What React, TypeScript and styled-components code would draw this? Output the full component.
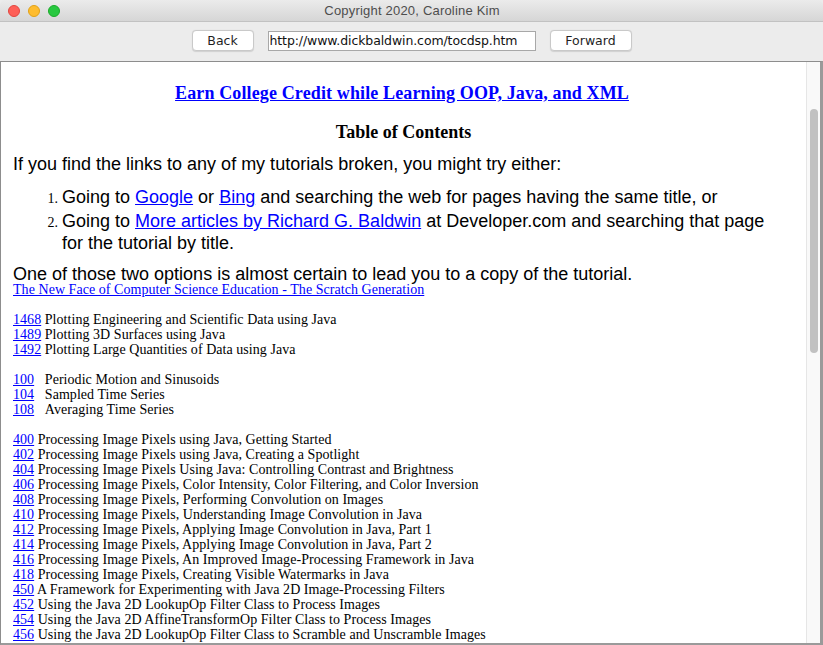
import React from "react";
import styled, { createGlobalStyle } from "styled-components";

const GlobalStyle = createGlobalStyle`
  html, body { margin: 0; padding: 0; background: #ffffff; }
  body { width: 823px; height: 645px; overflow: hidden; }
  * { box-sizing: border-box; }
`;

const Window = styled.div`
  width: 823px;
  height: 645px;
  display: flex;
  flex-direction: column;
  background: #ececec;
  overflow: hidden;
`;

const TitleBar = styled.div`
  height: 22px;
  flex: none;
  display: flex;
  align-items: center;
  position: relative;
  background: linear-gradient(#ebebeb, #d6d6d6);
  border-bottom: 1px solid #c2c2c2;
  border-radius: 5px 5px 0 0;
`;

const Lights = styled.div`
  position: absolute;
  left: 8px;
  top: 5px;
  display: flex;
  gap: 8px;
`;

const Light = styled.span<{ $c: string; $b: string }>`
  width: 12px;
  height: 12px;
  border-radius: 50%;
  background: ${(p) => p.$c};
  border: 0.5px solid ${(p) => p.$b};
`;

const Title = styled.div`
  flex: 1;
  text-align: center;
  font-family: "Liberation Sans", Arial, sans-serif;
  font-size: 13px;
  letter-spacing: 0.2px;
  color: #4d4d4d;
  padding-left: 1px;
`;

const Toolbar = styled.div`
  height: 39px;
  flex: none;
  display: flex;
  align-items: center;
  justify-content: center;
  gap: 14px;
  padding-bottom: 2px;
`;

const Button = styled.button<{ $w: number }>`
  width: ${(p) => p.$w}px;
  height: 21px;
  background: #ffffff;
  border: 1px solid #c9c9c9;
  border-radius: 4px;
  box-shadow: 0 0.5px 1px rgba(0, 0, 0, 0.12);
  font-family: "DejaVu Sans", Verdana, sans-serif;
  font-size: 12.5px;
  color: #1f1f1f;
  padding: 0;
  line-height: 19px;
`;

const UrlField = styled.div`
  width: 268px;
  height: 20px;
  background: #ffffff;
  border: 1px solid #a8a8a8;
  font-family: "DejaVu Sans", Verdana, sans-serif;
  font-size: 12.5px;
  color: #111;
  line-height: 18px;
  padding-left: 1px;
  white-space: nowrap;
  overflow: hidden;
  letter-spacing: -0.1px;
`;

const Frame = styled.div`
  flex: 1;
  display: flex;
  background: #ffffff;
  border-top: 1px solid #8d8d8d;
  border-left: 1px solid #8d8d8d;
  border-right: 3px solid #9a9a9a;
  border-bottom: 2px solid #9a9a9a;
  min-height: 0;
`;

const Page = styled.div`
  flex: 1;
  padding: 20px 12px 0 12px;
  overflow: hidden;
  color: #000;
`;

const Scrollbar = styled.div`
  width: 14px;
  flex: none;
  background: #f9f9f9;
  border-left: 1px solid #e6e6e6;
  padding: 47px 0 0 3px;
`;

const Thumb = styled.div`
  width: 8px;
  height: 244px;
  border-radius: 4px;
  background: #c1c1c1;
`;

const Banner = styled.a`
  display: block;
  text-align: center;
  font-family: "Liberation Serif", "Times New Roman", serif;
  font-weight: bold;
  font-size: 18px;
  letter-spacing: 0.13px;
  line-height: 22px;
  color: #0000ff;
  text-decoration: underline;
  padding-right: 3px;
`;

const Heading = styled.div`
  text-align: center;
  font-family: "Liberation Serif", "Times New Roman", serif;
  font-weight: bold;
  font-size: 18px;
  line-height: 22px;
  margin-top: 17px;
`;

const Para = styled.div<{ $mt: number; $lh?: number }>`
  font-family: "Liberation Sans", Arial, sans-serif;
  font-size: 18px;
  line-height: ${(p) => p.$lh ?? 22}px;
  margin-top: ${(p) => p.$mt}px;
`;

const SansLink = styled.a`
  color: #0000ff;
  text-decoration: underline;
`;

const List = styled.ol`
  list-style: none;
  margin: 11px 12px 0 0;
  padding: 0;
  display: flex;
  flex-direction: column;
`;

const Item = styled.li`
  display: grid;
  grid-template-columns: 45px 1fr;
  column-gap: 4px;
  align-items: baseline;
  font-family: "Liberation Sans", Arial, sans-serif;
  font-size: 18px;
  line-height: 22px;
`;

const Marker = styled.span`
  text-align: right;
  font-family: "Liberation Serif", "Times New Roman", serif;
  font-size: 14px;
  line-height: 22px;
`;

const Entries = styled.div`
  font-family: "Liberation Serif", "Times New Roman", serif;
  font-size: 14px;
  letter-spacing: 0.05px;
  line-height: 15px;
  white-space: pre;
  margin-top: -2px;
`;

const Gap = styled.div`
  height: 15px;
`;

const Row = styled.div``;

const SerifLink = styled.a`
  color: #0000ff;
  text-decoration: underline;
`;

type Entry = [string, string];

const groupA: Entry[] = [
  ["1468", " Plotting Engineering and Scientific Data using Java"],
  ["1489", " Plotting 3D Surfaces using Java"],
  ["1492", " Plotting Large Quantities of Data using Java"],
];

const groupB: Entry[] = [
  ["100", "\u00a0\u00a0\u00a0Periodic Motion and Sinusoids"],
  ["104", "\u00a0\u00a0\u00a0Sampled Time Series"],
  ["108", "\u00a0\u00a0\u00a0Averaging Time Series"],
];

const groupC: Entry[] = [
  ["400", " Processing Image Pixels using Java, Getting Started"],
  ["402", " Processing Image Pixels using Java, Creating a Spotlight"],
  ["404", " Processing Image Pixels Using Java: Controlling Contrast and Brightness"],
  ["406", " Processing Image Pixels, Color Intensity, Color Filtering, and Color Inversion"],
  ["408", " Processing Image Pixels, Performing Convolution on Images"],
  ["410", " Processing Image Pixels, Understanding Image Convolution in Java"],
  ["412", " Processing Image Pixels, Applying Image Convolution in Java, Part 1"],
  ["414", " Processing Image Pixels, Applying Image Convolution in Java, Part 2"],
  ["416", " Processing Image Pixels, An Improved Image-Processing Framework in Java"],
  ["418", " Processing Image Pixels, Creating Visible Watermarks in Java"],
  ["450", " A Framework for Experimenting with Java 2D Image-Processing Filters"],
  ["452", " Using the Java 2D LookupOp Filter Class to Process Images"],
  ["454", " Using the Java 2D AffineTransformOp Filter Class to Process Images"],
  ["456", " Using the Java 2D LookupOp Filter Class to Scramble and Unscramble Images"],
];

const Group = ({ items }: { items: Entry[] }) => (
  <>
    {items.map(([n, t]) => (
      <Row key={n}>
        <SerifLink href="#">{n}</SerifLink>
        {t}
      </Row>
    ))}
  </>
);

export default function App() {
  return (
    <>
      <GlobalStyle />
      <Window>
        <TitleBar>
          <Lights>
            <Light $c="#fe5f57" $b="#e2463f" />
            <Light $c="#febc2e" $b="#e1a116" />
            <Light $c="#28c840" $b="#1aab29" />
          </Lights>
          <Title>Copyright 2020, Caroline Kim</Title>
        </TitleBar>
        <Toolbar>
          <Button $w={62}>Back</Button>
          <UrlField>http://www.dickbaldwin.com/tocdsp.htm</UrlField>
          <Button $w={82}>Forward</Button>
        </Toolbar>
        <Frame>
          <Page>
            <Banner href="#">Earn College Credit while Learning OOP, Java, and XML</Banner>
            <Heading>Table of Contents</Heading>
            <Para $mt={10}>
              If you find the links to any of my tutorials broken, you might try either:
            </Para>
            <List>
              <Item>
                <Marker>1.</Marker>
                <span>
                  Going to <SansLink href="#">Google</SansLink> or{" "}
                  <SansLink href="#">Bing</SansLink> and searching the web for pages having the
                  same title, or
                </span>
              </Item>
              <Item>
                <Marker>2.</Marker>
                <span>
                  Going to <SansLink href="#">More articles by Richard G. Baldwin</SansLink> at
                  Developer.com and searching that page for the tutorial by title.
                </span>
              </Item>
            </List>
            <Para $mt={10} $lh={20}>
              One of those two options is almost certain to lead you to a copy of the tutorial.
            </Para>
            <Entries>
              <Row>
                <SerifLink href="#">
                  The New Face of Computer Science Education - The Scratch Generation
                </SerifLink>
              </Row>
              <Gap />
              <Group items={groupA} />
              <Gap />
              <Group items={groupB} />
              <Gap />
              <Group items={groupC} />
            </Entries>
          </Page>
          <Scrollbar>
            <Thumb />
          </Scrollbar>
        </Frame>
      </Window>
    </>
  );
}
